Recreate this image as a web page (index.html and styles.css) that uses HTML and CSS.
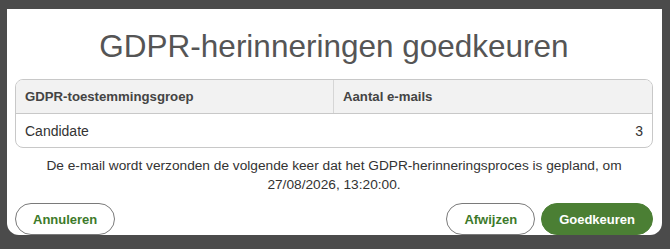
FILE: index.html
```html
<!DOCTYPE html>
<html lang="nl">
<head>
<meta charset="utf-8">
<link rel="stylesheet" href="styles.css">
</head>
<body>
<div class="dialog">
  <h1 class="title">GDPR-herinneringen goedkeuren</h1>
  <div class="table">
    <div class="row head">
      <div class="cell c1">GDPR-toestemmingsgroep</div>
      <div class="cell c2">Aantal e-mails</div>
    </div>
    <div class="row body">
      <div class="cell c1">Candidate</div>
      <div class="cell c2 num">3</div>
    </div>
  </div>
  <p class="note">De e-mail wordt verzonden de volgende keer dat het GDPR-herinneringsproces is gepland, om<br>27/08/2026, 13:20:00.</p>
  <div class="actions">
    <button class="btn outline">Annuleren</button>
    <div class="right">
      <button class="btn outline">Afwijzen</button>
      <button class="btn primary">Goedkeuren</button>
    </div>
  </div>
</div>
</body>
</html>
```
FILE: styles.css
```css
html, body {
  margin: 0;
  padding: 0;
  background: #4b4b4b;
  font-family: "Liberation Sans", Arial, sans-serif;
}
body {
  padding: 9px 0 0 7px;
  height: 249px;
  box-sizing: border-box;
}
.dialog {
  width: 655px;
  height: 226px;
  box-sizing: border-box;
  background: #fff;
  border-radius: 0 0 12px 12px;
  padding: 0 9px 0 8px;
  display: flex;
  flex-direction: column;
}
.title {
  margin: 0;
  height: 70px;
  line-height: 74px;
  text-align: center;
  font-size: 31.5px;
  font-weight: normal;
  color: #555;
}
.table {
  border: 1px solid #c8c8c8;
  border-radius: 8px;
  overflow: hidden;
}
.row {
  display: flex;
}
.head {
  background: #f2f2f2;
  height: 33px;
  border-bottom: 1px solid #c8c8c8;
}
.body {
  height: 34px;
}
.cell {
  display: flex;
  align-items: center;
  font-size: 14px;
  color: #333;
  padding: 0 9px;
  box-sizing: border-box;
}
.c1 { width: 318px; }
.head .c1 { border-right: 1px solid #d6d6d6; }
.c2 { flex: 1; }
.head .cell { font-weight: bold; color: #444; font-size: 13.2px; }
.num { justify-content: flex-end; }
.note {
  margin: 8px 0 0;
  text-align: center;
  font-size: 13.7px;
  line-height: 19px;
  color: #333;
}
.actions {
  margin-top: 9px;
  display: flex;
  justify-content: space-between;
}
.right {
  display: flex;
  gap: 6px;
}
.btn {
  height: 32px;
  border-radius: 16px;
  font-family: inherit;
  font-size: 13px;
  font-weight: bold;
  padding: 0 17px;
  cursor: pointer;
}
.outline {
  background: #fff;
  border: 1px solid #7a7a7a;
  color: #3d7a2a;
}
.primary {
  background: #4b7f34;
  border: 1px solid #4b7f34;
  color: #fff;
}
```
